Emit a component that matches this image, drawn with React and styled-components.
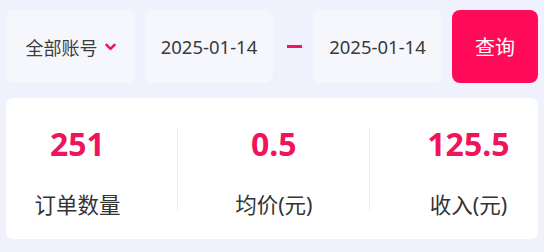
import React from "react";
import styled, { createGlobalStyle } from "styled-components";

const GlobalStyle = createGlobalStyle`
  html, body {
    margin: 0;
    padding: 0;
    background: #eff1fc;
  }
  body {
    font-family: "Noto Sans", "Noto Sans CJK SC", sans-serif;
    color: #333;
  }
  * { box-sizing: border-box; }
`;

const Page = styled.div`
  width: 544px;
  height: 252px;
  padding: 10px 6px 0;
  background: #eff1fc;
`;

const Toolbar = styled.div`
  display: grid;
  grid-template-columns: 129px 128px 20px 129px 86px;
  column-gap: 10px;
  height: 73px;
`;

const Field = styled.div`
  display: flex;
  align-items: center;
  justify-content: center;
  background: #f6f7fc;
  border-radius: 8px;
  font-size: ${(p) => p.$size || 18}px;
  color: #3a3a3a;
  white-space: nowrap;
`;

const FieldText = styled.span`
  font-family: "Noto Sans CJK SC", sans-serif;
  color: #3d3d3d;
`;

const Chevron = styled.svg`
  margin-left: 7px;
  width: 11px;
  height: 8px;
`;

const DashCell = styled.div`
  display: flex;
  align-items: center;
  justify-content: center;
`;

const Dash = styled.div`
  width: 15px;
  height: 3px;
  background: #f5145c;
  margin-left: 3px;
`;

const QueryButton = styled.button`
  border: none;
  border-radius: 8px;
  background: #ff0b59;
  color: #fff;
  font-family: "Noto Sans CJK SC", sans-serif;
  font-size: 20px;
  cursor: pointer;
  padding: 0;
`;

const Card = styled.div`
  margin-top: 15px;
  height: 141px;
  background: #fff;
  border-radius: 7px;
  display: flex;
  justify-content: space-around;
  align-items: flex-start;
  padding: 26px 0 19px;
`;

const Stat = styled.div`
  display: flex;
  flex-direction: column;
  align-items: center;
`;

const Value = styled.div`
  font-family: "Noto Sans", sans-serif;
  font-weight: 700;
  font-size: 32px;
  line-height: 40px;
  color: #f0145a;
`;

const Label = styled.div`
  margin-top: 26px;
  font-size: 21.5px;
  line-height: 30px;
  color: #333;
  white-space: nowrap;
`;

const Divider = styled.div`
  width: 1px;
  height: 82px;
  margin-top: 4px;
  background: #ebebf0;
`;

const stats = [
  { value: "251", label: "订单数量" },
  { value: "0.5", label: "均价(元)" },
  { value: "125.5", label: "收入(元)" },
];

export default function App() {
  return (
    <>
      <GlobalStyle />
      <Page>
        <Toolbar>
          <Field>
            <FieldText>全部账号</FieldText>
            <Chevron viewBox="0 0 11 8">
              <polyline
                points="1.5,1.8 5.5,5.8 9.5,1.8"
                fill="none"
                stroke="#f5145c"
                strokeWidth="2.6"
                strokeLinecap="round"
                strokeLinejoin="round"
              />
            </Chevron>
          </Field>
          <Field $size={18.5}>2025-01-14</Field>
          <DashCell>
            <Dash />
          </DashCell>
          <Field $size={18.5}>2025-01-14</Field>
          <QueryButton>查询</QueryButton>
        </Toolbar>
        <Card>
          {stats.map((s, i) => (
            <React.Fragment key={s.label}>
              {i > 0 && <Divider />}
              <Stat>
                <Value>{s.value}</Value>
                <Label>{s.label}</Label>
              </Stat>
            </React.Fragment>
          ))}
        </Card>
      </Page>
    </>
  );
}
